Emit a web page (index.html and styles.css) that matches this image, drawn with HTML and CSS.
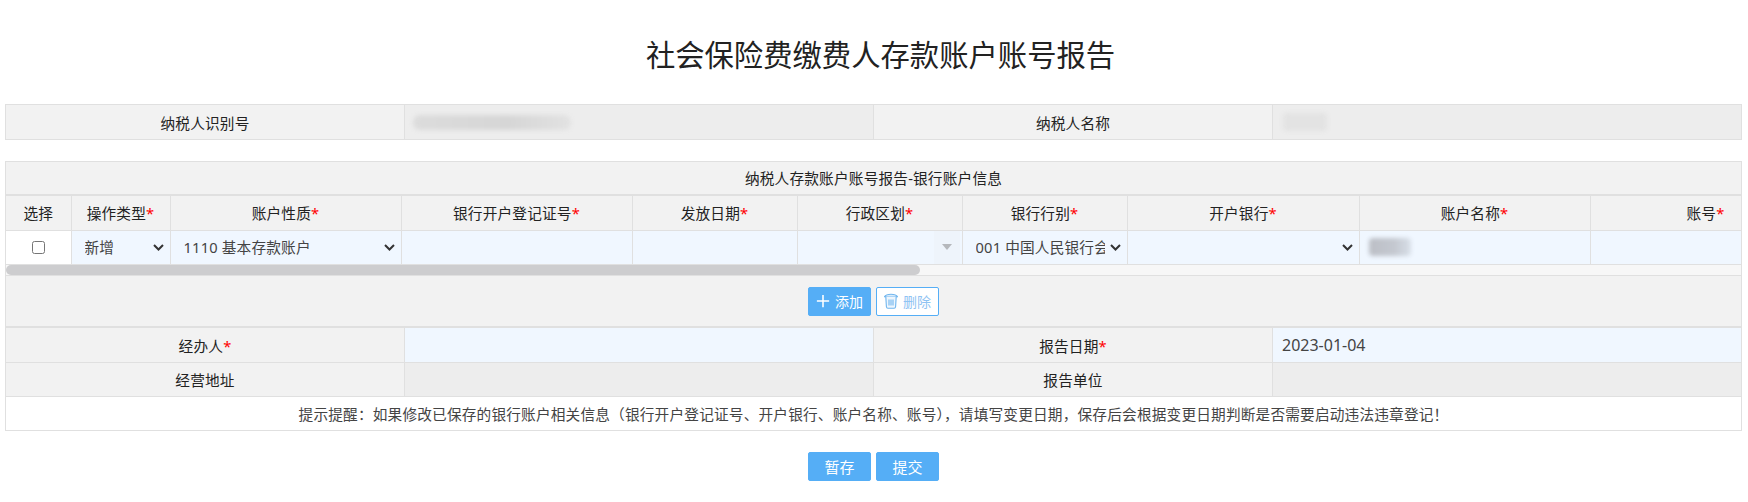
FILE: index.html
```html
<!DOCTYPE html>
<html lang="zh-CN">
<head>
<meta charset="utf-8">
<title>社会保险费缴费人存款账户账号报告</title>
<link rel="stylesheet" href="styles.css">
</head>
<body>
<div class="page">
  <h1 class="title">社会保险费缴费人存款账户账号报告</h1>

  <table class="grid info">
    <colgroup><col class="c-label"><col class="c-value"><col class="c-label"><col></colgroup>
    <tr>
      <th>纳税人识别号</th>
      <td class="readonly"><span class="blur blur-id"></span></td>
      <th>纳税人名称</th>
      <td class="readonly"><span class="blur blur-name"></span></td>
    </tr>
  </table>

  <div class="section">
    <div class="section-title">纳税人存款账户账号报告-银行账户信息</div>
    <div class="scroller">
      <table class="grid accounts">
        <colgroup>
          <col class="a1"><col class="a2"><col class="a3"><col class="a4"><col class="a5"><col class="a6"><col class="a7"><col class="a8"><col class="a9"><col class="a10"><col>
        </colgroup>
        <tr class="head">
          <th>选择</th>
          <th>操作类型<i>*</i></th>
          <th>账户性质<i>*</i></th>
          <th>银行开户登记证号<i>*</i></th>
          <th>发放日期<i>*</i></th>
          <th>行政区划<i>*</i></th>
          <th>银行行别<i>*</i></th>
          <th>开户银行<i>*</i></th>
          <th>账户名称<i>*</i></th>
          <th>账号<i>*</i></th>
          <th></th>
        </tr>
        <tr class="row">
          <td class="plain"><input class="check" type="checkbox"></td>
          <td class="edit"><select class="sel"><option>新增</option></select></td>
          <td class="edit"><select class="sel"><option>1110 基本存款账户</option></select></td>
          <td class="edit"></td>
          <td class="edit"></td>
          <td class="edit combo"><span class="combo-btn"><span class="caret"></span></span></td>
          <td class="edit"><select class="sel"><option>001 中国人民银行会计司</option></select></td>
          <td class="edit"><select class="sel"><option></option></select></td>
          <td class="edit"><span class="blur blur-acct"></span></td>
          <td class="edit"></td>
          <td class="edit"></td>
        </tr>
      </table>
    </div>
    <div class="scrollbar"><div class="thumb"></div></div>
    <div class="toolbar">
      <button class="btn" type="button">
        <svg class="ico" viewBox="0 0 16 16"><path d="M8 1v14M1 8h14" fill="none" stroke="#fff" stroke-width="1.8"/></svg>添加
      </button>
      <button class="btn ghost" type="button">
        <svg class="ico trash" viewBox="0 0 14 16" fill="none" stroke="#6fb5ee" stroke-width="1.1"><path d="M.6 3.6C1.5 2 3.5 1.2 7 1.2s5.5.8 6.400 2.400z" fill="#d9ecfb"/><path d="M1.800 3.600l.6 10.200c.1.800.6 1.500 1.500 1.500h6.200c.9 0 1.400-.7 1.500-1.500l.6-10.200" fill="#eef6fd"/><path d="M5 6.500v6M7 6.500v6M9 6.500v6"/></svg>删除
      </button>
    </div>
  </div>

  <table class="grid form">
    <colgroup><col class="c-label"><col class="c-value"><col class="c-label"><col></colgroup>
    <tr class="first">
      <th>经办人<i>*</i></th>
      <td class="edit"></td>
      <th>报告日期<i>*</i></th>
      <td class="edit value">2023-01-04</td>
    </tr>
    <tr>
      <th>经营地址</th>
      <td class="readonly"></td>
      <th>报告单位</th>
      <td class="readonly"></td>
    </tr>
    <tr>
      <td class="notice" colspan="4">提示提醒：如果修改已保存的银行账户相关信息（银行开户登记证号、开户银行、账户名称、账号），请填写变更日期，保存后会根据变更日期判断是否需要启动违法违章登记！</td>
    </tr>
  </table>

  <div class="actions">
    <button class="btn wide" type="button">暂存</button>
    <button class="btn wide" type="button">提交</button>
  </div>
</div>
</body>
</html>
```

FILE: styles.css
```css
* { box-sizing: border-box; }
html, body { margin: 0; padding: 0; background: #fff; overflow: hidden; }
body {
  font-family: "Noto Sans", "Noto Sans CJK SC", sans-serif;
  font-size: 14.67px;
  letter-spacing: 0.18px;
  color: #222;
}
.page { padding: 0 6px 0 5px; }
.title {
  margin: 0;
  height: 104px;
  padding: 34px 0 0 14px;
  font-size: 29.33px;
  line-height: 42px;
  letter-spacing: 0;
  font-weight: 400;
  text-align: center;
  color: #222;
}
.grid {
  width: 100%;
  border-collapse: collapse;
  table-layout: fixed;
}
.grid th, .grid td {
  border: 1px solid #e0e0e0;
  height: 34px;
  padding: 0;
  font-weight: 400;
  text-align: center;
  vertical-align: middle;
}
.grid th { background: #f2f2f2; }
.grid i { font-style: normal; color: #f00; }
.info th, .info td { height: 35px; }
.form .first th, .form .first td { height: 35px; }
.c-label { width: 399px; }
.c-value { width: 469px; }
.readonly { background: #ededed; }
.grid td.readonly { text-align: left; padding-left: 8px; }
.edit { background: #f0f7ff; }
.plain { background: #fff; }
.section {
  margin-top: 21px;
  border: 1px solid #e0e0e0;
  background: #f2f2f2;
}
.section-title {
  height: 34px;
  line-height: 33px;
  text-align: center;
  border-bottom: 2px solid #e0e0e0;
}
.scroller {
  overflow: hidden;
  background: #fff;
  border-bottom: 1px solid #e0e0e0;
}
.scrollbar { height: 10px; background: #f7f7f7; }
.thumb { width: 914px; height: 10px; background: #cdcdcf; border-radius: 5px; }
.accounts { width: 3300px; border-style: hidden; }
.a1 { width: 65px; }
.a2 { width: 99px; }
.a3 { width: 231px; }
.a4 { width: 231px; }
.a5 { width: 165px; }
.a6 { width: 165px; }
.a7 { width: 165px; }
.a8 { width: 232px; }
.a9 { width: 231px; }
.a10 { width: 231px; }
.accounts .head th { height: 34px; }
.accounts .row td { height: 34px; }
.accounts td.edit { text-align: left; }
.sel {
  display: block;
  width: 100%;
  height: 33px;
  padding: 0 22px 0 13px;
  border: 0;
  appearance: none;
  background: transparent url("data:image/svg+xml,%3Csvg xmlns='http://www.w3.org/2000/svg' width='11' height='7'%3E%3Cpath d='M1 1l4.500 4.500L10 1' fill='none' stroke='%23333' stroke-width='2'/%3E%3C/svg%3E") no-repeat right 6px center;
  font: inherit;
  letter-spacing: inherit;
  color: #444;
  outline: 0;
}
.check { display: block; margin: 0 auto; width: 13px; height: 13px; }
.combo { position: relative; }
.combo-btn {
  position: absolute;
  top: 0; right: 2px; bottom: 0;
  width: 26px;
  background: #eef4fb;
  display: flex;
  align-items: center;
  justify-content: center;
}
.caret {
  width: 0; height: 0;
  border-left: 5px solid transparent;
  border-right: 5px solid transparent;
  border-top: 6px solid #b5b8bc;
}
.blur { display: block; filter: blur(2px); }
.blur-id {
  width: 158px; height: 15px; margin-left: 0;
  border-radius: 7px;
  background: linear-gradient(90deg, #dcdcdc, #d6d6d6 60%, #e2e2e2);
}
.blur-name { width: 44px; height: 18px; background: #e3e3e3; margin-left: 2px; border-radius: 4px; }
.blur-acct {
  width: 42px; height: 18px; margin-left: 9px;
  border-radius: 4px;
  background: linear-gradient(90deg, #bcbfc6, #c4c8d0 60%, #d8dfe8);
}
.toolbar {
  height: 51px;
  display: flex;
  align-items: center;
  justify-content: center;
  gap: 5px;
  border-top: 1px solid #e0e0e0;
}
.btn {
  display: inline-flex;
  align-items: center;
  justify-content: center;
  gap: 5px;
  width: 63px;
  height: 29px;
  padding: 0;
  border: 1px solid #55aef6;
  border-radius: 2px;
  background: #55aef6;
  color: #fff;
  font: inherit;
  font-size: 14px;
  letter-spacing: 0;
}
.ghost { background: #fff; color: #8fc3f3; }
.ico { width: 14px; height: 14px; flex: none; }
.trash { height: 16px; }
.grid .notice { background: #fff; color: #444; }
.grid td.value { text-align: left; padding-left: 9px; color: #444; font-size: 16px; letter-spacing: 0; }
.actions {
  display: flex;
  justify-content: center;
  gap: 5px;
  margin-top: 21px;
}
.wide { font-size: 15px; }
```
